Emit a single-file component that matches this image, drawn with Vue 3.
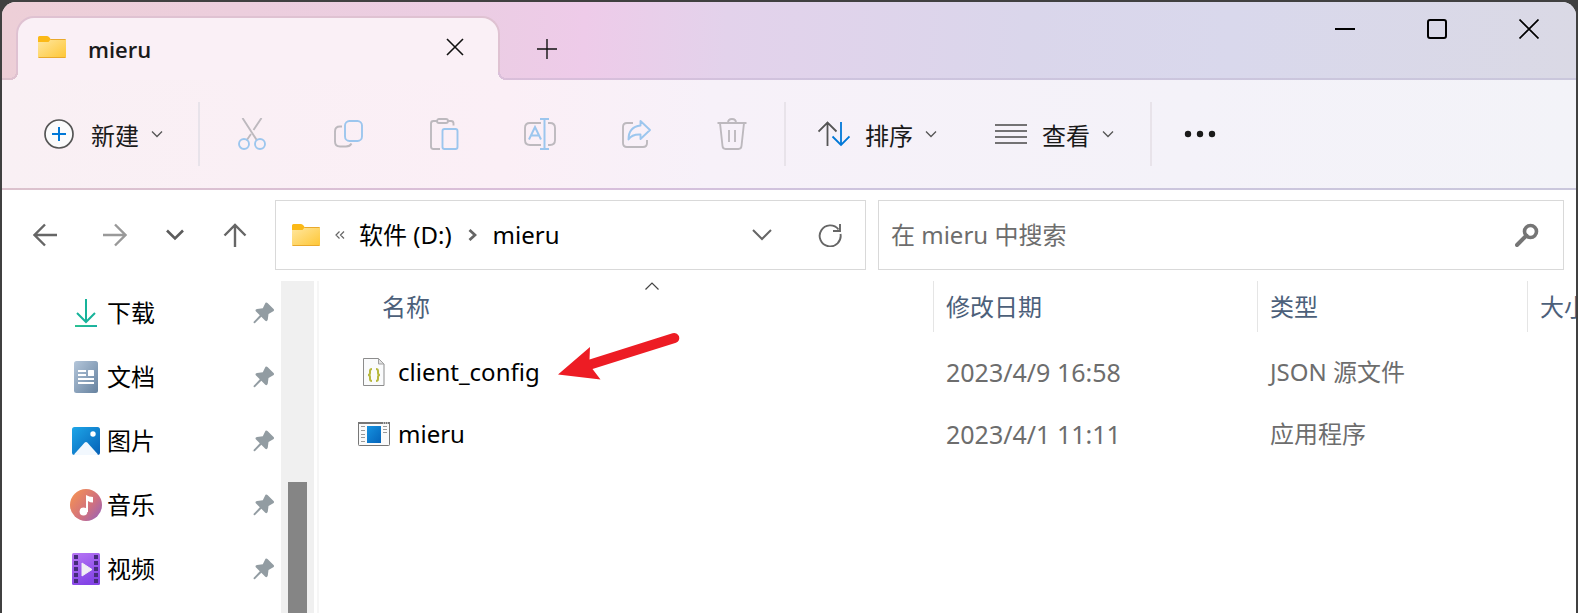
<script setup>
import { ref } from 'vue'

const places = ['下载', '文档', '图片', '音乐', '视频']
const icons = ['download', 'document', 'picture', 'music', 'video']
const files = [
  { name: 'client_config', kind: 'json', date: '2023/4/9 16:58', type: 'JSON 源文件', marked: true },
  { name: 'mieru', kind: 'exe', date: '2023/4/1 11:11', type: '应用程序', marked: false },
]
const query = ref('')
</script>

<template>
  <div class="window">
    <svg class="defs" width="0" height="0" aria-hidden="true">
      <defs>
        <linearGradient id="gFolder" x1="0" y1="0" x2="1" y2="1"><stop offset="0" stop-color="#ffe7a0" /><stop offset="1" stop-color="#fec634" /></linearGradient>
        <linearGradient id="gDown" x1="0" y1="0" x2="1" y2="1"><stop offset="0" stop-color="#36c98a" /><stop offset="1" stop-color="#10a8a8" /></linearGradient>
        <linearGradient id="gDoc" x1="0" y1="0" x2="1" y2="1"><stop offset="0" stop-color="#b4c6da" /><stop offset="1" stop-color="#66829f" /></linearGradient>
        <linearGradient id="gPic" x1="0" y1="0" x2="1" y2="1"><stop offset="0" stop-color="#1ea6e8" /><stop offset="1" stop-color="#0560b6" /></linearGradient>
        <linearGradient id="gApp" x1="0" y1="0" x2="1" y2="1"><stop offset="0" stop-color="#1592e0" /><stop offset="1" stop-color="#0564ba" /></linearGradient>
        <linearGradient id="gMusic" x1="0" y1="0.2" x2="1" y2="1"><stop offset="0" stop-color="#f39055" /><stop offset="0.55" stop-color="#d0707f" /><stop offset="1" stop-color="#9060c0" /></linearGradient>
        <linearGradient id="gVideo" x1="0" y1="0" x2="0.4" y2="1"><stop offset="0" stop-color="#b877f5" /><stop offset="1" stop-color="#8444e6" /></linearGradient>
        <symbol id="folder" viewBox="0 0 28 22">
          <path d="M0 1.500Q0 0 1.500 0H9Q10.500 0 11.500 1.500L12.500 3H26.500Q28 3 28 4.500V8H0Z" fill="#fbb917" />
          <path d="M0 6H10.500L12.500 3.500H27.500Q28 3.500 28 4.500V20.500Q28 22 26.500 22H1.500Q0 22 0 20.500Z" fill="url(#gFolder)" />
          <path d="M12.500 3.500H27.500M0.500 21.500H27.500" stroke="#e9a92c" stroke-width="1" />
        </symbol>
        <symbol id="caret" viewBox="0 0 12 8"><path d="M1 1.500 6 6.500 11 1.500" fill="none" stroke="#555" stroke-width="1.300" /></symbol>
      </defs>
    </svg>

    <header class="titlebar">
      <div class="tab">
        <svg class="folder"><use href="#folder" /></svg>
        <span class="tab-name">mieru</span>
        <button class="tab-close" aria-label="关闭标签页">
          <svg width="18" height="18" viewBox="0 0 18 18"><path d="M1 1 17 17M17 1 1 17" stroke="#111" stroke-width="1.600" /></svg>
        </button>
      </div>
      <button class="tab-add" aria-label="新建标签页">
        <svg width="20" height="20" viewBox="0 0 20 20"><path d="M10 0V20M0 10H20" stroke="#111" stroke-width="1.400" /></svg>
      </button>
      <div class="caption">
        <button aria-label="最小化"><svg width="20" height="20" viewBox="0 0 20 20"><path d="M0 10H20" stroke="#000" stroke-width="2" /></svg></button>
        <button aria-label="最大化"><svg width="20" height="20" viewBox="0 0 20 20"><rect x="1" y="1" width="18" height="18" rx="2" fill="none" stroke="#000" stroke-width="2" /></svg></button>
        <button aria-label="关闭"><svg width="20" height="20" viewBox="0 0 20 20"><path d="M0.500 0.500 19.500 19.500M19.500 0.500 0.500 19.500" stroke="#000" stroke-width="1.700" /></svg></button>
      </div>
    </header>

    <div class="toolbar">
      <button class="menu new">
        <svg width="30" height="30" viewBox="0 0 30 30"><circle cx="15" cy="15" r="14" fill="#fbfbfc" stroke="#555" stroke-width="1.700" /><path d="M15 8V22M8 15H22" stroke="#0078d7" stroke-width="2" /></svg>
        <span>新建</span><svg class="caret"><use href="#caret" /></svg>
      </button>
      <i class="rule"></i>
      <div class="tools">
        <button aria-label="剪切"><svg width="32" height="32" viewBox="0 0 32 32" fill="none" stroke-width="1.900"><path d="M6.500 0 21 22.500M25.500 0 17.500 12M15 16 10.500 22.500" stroke="#bdb9be" /><circle cx="8" cy="26" r="5" stroke="#9cc6ee" /><circle cx="24" cy="26" r="5" stroke="#9cc6ee" /></svg></button>
        <button aria-label="复制"><svg width="32" height="32" viewBox="0 0 32 32" fill="none" stroke-width="1.900"><path d="M10 8.500H8Q3 8.500 3 13.500V23.500Q3 28.500 8 28.500H14Q18 28.500 19.500 25.500" stroke="#bdb9be" /><rect x="13" y="3" width="17" height="20" rx="4.500" stroke="#9cc6ee" /></svg></button>
        <button aria-label="粘贴"><svg width="32" height="32" viewBox="0 0 32 32" fill="none" stroke-width="1.900"><path d="M9 3H5.500Q3 3 3 5.500V28.500Q3 31 5.500 31H12M20 3H23Q25.500 3 25.500 5.500V7.500" stroke="#bdb9be" /><rect x="9" y="1" width="11" height="4" rx="2" stroke="#bdb9be" /><rect x="14.500" y="11" width="15" height="20" rx="2" stroke="#9cc6ee" /></svg></button>
        <button aria-label="重命名"><svg width="34" height="32" viewBox="0 0 34 32" fill="none" stroke-width="1.900"><path d="M18 5H7Q2 5 2 10V22Q2 27 7 27H18M25 5H27Q32 5 32 10V22Q32 27 27 27H25" stroke="#bdb9be" /><path d="M6 21.500 12 9 18 21.500M8.500 17.500H15.500M17 1H26M17 31H26M21.500 1V31" stroke="#9cc6ee" stroke-width="2" /></svg></button>
        <button aria-label="共享"><svg width="32" height="32" viewBox="0 0 32 32" fill="none" stroke-width="1.900" stroke-linejoin="round"><path d="M13 5H7Q3 5 3 9V25Q3 29 7 29H23Q27 29 27 25V22" stroke="#bdb9be" /><path d="M20.500 3 30 12 20.500 21V16.500Q12 16 8.500 21.500 8.500 9 20.500 7.500Z" stroke="#9cc6ee" /></svg></button>
        <button aria-label="删除"><svg width="32" height="32" viewBox="0 0 32 32" fill="none" stroke="#bdb9be" stroke-width="1.900"><path d="M1.500 5H30.500M12 5Q12 1 16 1T20 5M4 5 6.500 28Q6.800 31 9.500 31H22.500Q25.200 31 25.500 28L28 5M13 12V24M19 12V24" /></svg></button>
      </div>
      <i class="rule"></i>
      <button class="menu sort">
        <svg width="32" height="26" viewBox="0 0 32 26" fill="none" stroke-width="1.800"><path d="M9.500 25V1.500M0.500 10.500 9.500 1.500 18.500 10.500" stroke="#555" /><path d="M23 1V24.500M14.500 15.500 23 24 31.500 15.500" stroke="#0078d7" /></svg>
        <span>排序</span><svg class="caret"><use href="#caret" /></svg>
      </button>
      <button class="menu view">
        <svg width="32" height="20" viewBox="0 0 32 20" stroke="#484848" stroke-width="1.600"><path d="M0 1H32M0 7H32M0 13H32M0 19H32" /></svg>
        <span>查看</span><svg class="caret"><use href="#caret" /></svg>
      </button>
      <i class="rule"></i>
      <button class="more" aria-label="查看更多"><svg width="32" height="8" viewBox="0 0 32 8" fill="#1a1a1a"><circle cx="4" cy="4" r="3.200" /><circle cx="16" cy="4" r="3.200" /><circle cx="28" cy="4" r="3.200" /></svg></button>
    </div>

    <div class="navrow">
      <div class="history">
        <button aria-label="后退"><svg width="24" height="24" viewBox="0 0 24 24" fill="none" stroke="#666" stroke-width="2.400"><path d="M24 12H1.500M12 1.500 1.500 12 12 22.500" /></svg></button>
        <button aria-label="前进"><svg width="24" height="24" viewBox="0 0 24 24" fill="none" stroke="#999" stroke-width="2.400"><path d="M0 12H22.500M12 1.500 22.500 12 12 22.500" /></svg></button>
        <button class="recent" aria-label="最近浏览的位置"><svg width="18" height="12" viewBox="0 0 18 12" fill="none" stroke="#5c5c5c" stroke-width="2.600"><path d="M1 1.500 9 9.500 17 1.500" /></svg></button>
        <button aria-label="向上"><svg width="24" height="24" viewBox="0 0 24 24" fill="none" stroke="#666" stroke-width="2.400"><path d="M12 24V1.500M1.500 12.500 12 2 22.500 12.500" /></svg></button>
      </div>
      <nav class="address" aria-label="地址栏">
        <svg class="folder"><use href="#folder" /></svg>
        <button class="root" aria-label="上级位置"><svg width="10" height="8" viewBox="0 0 10 8" fill="none" stroke="#666" stroke-width="1.200"><path d="M4.500 0.500 1 4 4.500 7.500M9 0.500 5.500 4 9 7.500" /></svg></button>
        <button class="crumb">软件 (D:)</button>
        <svg class="step" width="9" height="12" viewBox="0 0 9 12" fill="none" stroke="#666" stroke-width="2.800"><path d="M1.500 1 7 6 1.500 11" /></svg>
        <button class="crumb">mieru</button>
        <button class="expand" aria-label="以前的位置"><svg width="20" height="12" viewBox="0 0 20 12" fill="none" stroke="#666" stroke-width="2"><path d="M1 1 10 10 19 1" /></svg></button>
        <button class="refresh" aria-label="刷新"><svg width="24" height="24" viewBox="0 0 24 24" fill="none" stroke="#666" stroke-width="1.900"><path d="M22.500 11A10.500 10.500 0 1 1 20.500 6.500M22 1V8H15" /></svg></button>
      </nav>
      <label class="search">
        <input v-model="query" type="text" placeholder="在 mieru 中搜索" aria-label="在 mieru 中搜索" />
        <svg width="24" height="24" viewBox="0 0 24 24" fill="none" stroke="#757575"><circle cx="15.500" cy="8.500" r="6" stroke-width="3.600" /><path d="M11.500 12.500 2 22" stroke-width="4" stroke-linecap="round" /></svg>
      </label>
    </div>

    <div class="body">
      <aside class="sidebar">
        <ul>
          <li v-for="(place, i) in places" :key="place">
            <a href="#">
              <svg class="place" viewBox="0 0 32 32">
                <g v-if="icons[i] === 'download'" fill="none"><path d="M16 2V25M7 16 16 25 25 16" stroke="#17b39a" stroke-width="2" /><rect x="5" y="28" width="22" height="2" fill="url(#gDown)" /></g>
                <g v-else-if="icons[i] === 'document'"><rect x="4" y="0" width="24" height="32" rx="2.500" fill="url(#gDoc)" /><path d="M8 10H16M8 14H16M8 18H24M8 22H24" stroke="#fff" stroke-width="2" /><rect x="18" y="9" width="6" height="6" rx="0.500" fill="#fff" /></g>
                <g v-else-if="icons[i] === 'picture'"><rect x="2" y="2" width="28" height="28" rx="2.500" fill="url(#gPic)" /><path d="M4 29.500 14.500 17.800Q16 16.300 17.500 17.800L28 29.500Q27.500 30 26 30H6Q4.500 30 4 29.500Z" fill="#f2f8fe" /><circle cx="23" cy="9" r="2.700" fill="#fff" /></g>
                <g v-else-if="icons[i] === 'music'"><circle cx="16" cy="16" r="16" fill="url(#gMusic)" /><circle cx="13.500" cy="22.500" r="3.900" fill="#fff" /><path d="M16 23V6Q19 8 23 8V13.500Q20 13.500 18 12V23Z" fill="#fff" /></g>
                <g v-else><rect x="2" y="0" width="28" height="32" rx="1.500" fill="url(#gVideo)" /><path d="M6 2V32M26 2V32" stroke="#452b7b" stroke-width="4" stroke-dasharray="4 2" /><path d="M12 10V23L22 16.500Z" fill="#f1eef5" stroke="#f1eef5" stroke-linejoin="round" /></g>
              </svg>
              <span>{{ place }}</span>
            </a>
            <svg class="pin" width="22" height="22" viewBox="0 0 22 22"><path d="M12.500 0.800Q13.500 0 14.500 1L20.800 7.200Q21.500 8.500 20.300 9.300L15.500 12 14.800 17.500Q14 20 12.300 18.800L8.300 14.800 1.800 21.300Q0.500 21.500 0.500 20L6.800 13.300 2.800 9.300Q1.800 7.500 4 7L9.800 6.200Z" fill="#929ca2" /></svg>
          </li>
        </ul>
      </aside>
      <div class="scrollbar"><div class="thumb"></div></div>
      <main class="content">
        <table>
          <colgroup><col /><col class="c-date" /><col class="c-type" /><col class="c-size" /></colgroup>
          <thead>
            <tr>
              <th scope="col">
                <div class="name-head">名称<svg class="sorted" width="14" height="8" viewBox="0 0 14 8" fill="none" stroke="#444" stroke-width="1.200"><path d="M0.500 7.500 7 1 13.500 7.500" /></svg></div>
              </th>
              <th scope="col">修改日期</th>
              <th scope="col">类型</th>
              <th scope="col">大小</th>
            </tr>
          </thead>
          <tbody>
            <tr v-for="file in files" :key="file.name">
              <td>
                <div class="file">
                  <svg class="file-icon" viewBox="0 0 32 32">
                    <g v-if="file.kind === 'json'"><path d="M5.500 2.500H20.500L26 8V29.500H5.500Z" fill="#fafbfc" stroke="#8c8c8c" /><path d="M20.500 2.500V8H26Z" fill="#e2e2e2" stroke="#a0a0a0" /><path d="M14 13Q12 13 12 15V17Q12 19 10 19 12 19 12 21V23Q12 25 14 25M18 13Q20 13 20 15V17Q20 19 22 19 20 19 20 21V23Q20 25 18 25" fill="none" stroke="#b7b83f" stroke-width="2" /></g>
                    <g v-else><rect x="0.500" y="4.500" width="31" height="23" rx="0.800" fill="#fafafa" stroke="#777" /><path d="M0 5H32" stroke="#777" stroke-width="2" /><path d="M25 5H26M27 5H28M29 5H30" stroke="#fff" /><rect x="9" y="8" width="14" height="17" fill="url(#gApp)" /><path d="M3 8.500H7M3 12.500H7M3 16.500H7M3 19.500H7M3 23.500H7M25 8.500H29M25 11.500H29M25 14.500H29" stroke="#999" /></g>
                  </svg>
                  <span>{{ file.name }}</span>
                  <svg v-if="file.marked" class="arrow" width="126" height="56" viewBox="0 0 126 56"><path d="M2 45.500 34 18 33.500 30.500 116.500 4.300A5 5 0 0 1 120 13.800L36.500 40 44.500 50.500Z" fill="#ed1c24" /></svg>
                </div>
              </td>
              <td class="date">{{ file.date }}</td>
              <td>{{ file.type }}</td>
              <td></td>
            </tr>
          </tbody>
        </table>
      </main>
    </div>
  </div>
</template>

<style>
html, body, #app { height: 100%; }
body { margin: 0; background: #404040; overflow: hidden; }
</style>

<style scoped>
* { box-sizing: border-box; }
.window {
  --line: linear-gradient(90deg, #dcc2cd 0, #d9bedb 36%, #cdc4de 55%, #cac7dc 100%);
  height: calc(100vh - 2px);
  margin: 2px 2px 0;
  display: flex;
  flex-direction: column;
  overflow: hidden;
  border-radius: 14px 14px 0 0;
  background: #fff;
  color: #000;
  font: 24px/32px "Noto Sans", "Noto Sans CJK SC", sans-serif;
}
.defs { position: absolute; }
button { padding: 0; border: 0; background: none; color: inherit; font: inherit; display: flex; align-items: center; justify-content: center; }
svg { display: block; flex: none; }
.folder { width: 28px; height: 22px; }
.caret { width: 12px; height: 8px; }

.titlebar {
  height: 78px;
  flex: none;
  display: flex;
  align-items: flex-start;
  background: var(--line) bottom / 100% 2px no-repeat, linear-gradient(92deg, #edcfd7 0, #ebcde3 30%, #eecbe9 37%, #e3d2eb 46%, #dad6eb 65%, #d9d8ec 78%, #dad9e5 100%);
}
.tab {
  position: relative;
  width: 484px;
  height: 64px;
  margin: 14px 0 0 14px;
  padding: 0 34px 4px 20px;
  display: flex;
  align-items: center;
  border: 2px solid #dfc2d2;
  border-bottom: 0;
  border-radius: 18px 18px 0 0;
  background: #faf0f6;
}
.tab::before, .tab::after { content: ""; position: absolute; bottom: 0; width: 8px; height: 8px; }
.tab::before { left: -8px; background: radial-gradient(circle at 0 0, transparent 6px, #dfc2d0 6px 8px, #faf0f5 8px); }
.tab::after { right: -8px; background: radial-gradient(circle at 100% 0, transparent 6px, #dbc0da 6px 8px, #faf0f6 8px); }
.tab-name { margin-left: 22px; flex: 1; padding-top: 4px; font-family: "Open Sans", "Noto Sans", sans-serif; font-size: 22px; font-weight: 600; color: #1a1a1a; }
.tab-add { width: 64px; height: 62px; margin: 16px 0 0 15px; }
.caption { margin: 0 1px 0 auto; display: flex; }
.caption button { width: 92px; height: 54px; }

.toolbar {
  height: 110px;
  flex: none;
  display: flex;
  align-items: center;
  padding: 0 0 2px 42px;
  color: #1a1a1a;
  background: var(--line) bottom / 100% 2px no-repeat, linear-gradient(92deg, #f9f0f4 0, #fbeff6 32%, #f7f1f9 45%, #f4f2f9 75%, #f3f3f8 100%);
}
.menu { height: 64px; }
.menu span { margin: 4px 12px 0 15px; }
.rule { width: 2px; height: 64px; background: #e8e3ea; }
.new { width: 122px; margin-right: 32px; justify-content: flex-start; }
.new span { margin-left: 17px; }
.tools { display: flex; padding: 0 4px; }
.tools button { width: 96px; height: 64px; }
.sort { margin-left: 32px; }
.view { margin: 0 36px 0 58px; }
.more { width: 96px; height: 64px; }

.navrow { display: flex; align-items: center; padding: 10px 12px 11px 31px; flex: none; }
.history { display: flex; align-items: center; gap: 46px; margin-right: 28px; }
.history button { height: 40px; }
.history .recent { margin: 0 -7px; }
.address, .search { height: 70px; border: 1px solid #d9d9d9; display: flex; align-items: center; }
.address { flex: 550 1 0; margin-right: 12px; padding: 0 23px 0 16px; }
.root { width: 10px; margin: 0 14px 0 15px; }
.step { margin: 0 16px; }
.expand { margin-left: auto; }
.refresh { margin-left: 46px; }
.search { flex: 648 1 0; padding: 0 24px 0 12px; }
.search input { flex: 1; min-width: 0; padding: 0; border: 0; outline: 0; background: none; font: inherit; color: #000; }
.search input::placeholder { color: #6d6d6d; opacity: 1; }

.body { flex: 1; min-height: 0; display: flex; }
.sidebar { width: 279px; flex: none; }
ul { margin: 0; padding: 0; list-style: none; }
li { height: 64px; padding: 0 6px 0 68px; display: flex; align-items: center; justify-content: space-between; }
a { display: flex; align-items: center; gap: 5px; color: #000; text-decoration: none; }
.place { width: 32px; height: 32px; }
.scrollbar { width: 33px; flex: none; padding: 201px 7px 0; background: #f0f0f0; }
.thumb { height: 100%; background: #858585; }
.content { flex: 1; min-width: 0; margin-left: 3px; border-left: 2px solid #f6f6f6; }
table { width: 100%; table-layout: fixed; border-collapse: separate; border-spacing: 0; }
.c-date { width: 324px; }
.c-type { width: 270px; }
.c-size { width: 49px; }
th, td { padding: 0 0 0 12px; text-align: left; font-weight: 400; white-space: nowrap; overflow: hidden; color: #6d6d6d; }
th { height: 51px; border-left: 1px solid #e5e5e5; color: #4c607a; }
th:first-child, td:first-child { padding-left: 0; border: 0; overflow: visible; }
.name-head { position: relative; margin-left: 51px; padding-left: 12px; line-height: 51px; }
.sorted { position: absolute; top: 1px; left: 50%; margin-left: -7px; }
tbody { color: #000; }
tbody::before { content: ""; display: block; height: 9px; }
td { height: 62px; padding-left: 13px; }
.date { font-size: 25px; }
.file { position: relative; display: flex; align-items: center; gap: 8px; padding-left: 39px; color: #000; }
.file-icon { width: 32px; height: 32px; }
.arrow { position: absolute; left: 237px; bottom: 3px; }
</style>
